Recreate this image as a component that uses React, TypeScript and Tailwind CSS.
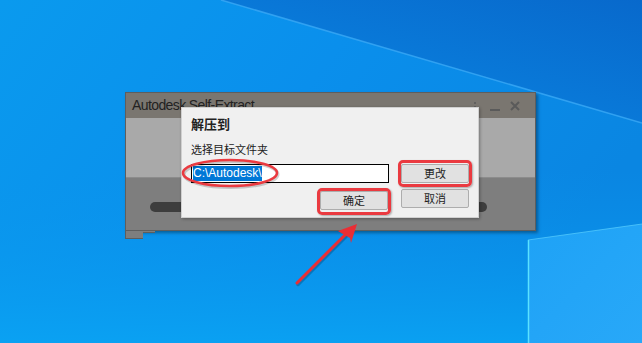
import React from "react";

const cjk = { fontFamily: '"Noto Sans CJK SC", "Noto Sans", sans-serif' };
const latin = { fontFamily: '"Liberation Sans", Arial, sans-serif' };

function Wallpaper() {
  return (
    <svg className="absolute inset-0" width="642" height="343" viewBox="0 0 642 343">
      <defs>
        <linearGradient id="base" x1="0" y1="0" x2="1" y2="0.4">
          <stop offset="0" stopColor="#0a9aee" />
          <stop offset="0.5" stopColor="#0a8fec" />
          <stop offset="1" stopColor="#0a86e2" />
        </linearGradient>
        <linearGradient id="dark" x1="0" y1="1" x2="1" y2="0">
          <stop offset="0" stopColor="#0a88e4" />
          <stop offset="1" stopColor="#0869cc" />
        </linearGradient>
        <linearGradient id="bottom" x1="0" y1="0" x2="0" y2="1">
          <stop offset="0" stopColor="#0a95ec" stopOpacity="0" />
          <stop offset="1" stopColor="#0aa3f3" stopOpacity="0.9" />
        </linearGradient>
        <linearGradient id="pane" x1="0" y1="0" x2="1" y2="1">
          <stop offset="0" stopColor="#1ea2f6" />
          <stop offset="1" stopColor="#28a8f8" />
        </linearGradient>
      </defs>
      <rect x="0" y="0" width="642" height="343" fill="url(#base)" />
      <rect x="0" y="170" width="642" height="173" fill="url(#bottom)" />
      <polygon points="221,0 642,0 642,123" fill="url(#dark)" />
      <line x1="221" y1="0" x2="642" y2="123" stroke="#3aa9f6" strokeWidth="1.5" opacity="0.8" />
      <polygon points="528,240 642,224 642,343 528,343" fill="url(#pane)" />
      <line x1="528.5" y1="240" x2="528.5" y2="343" stroke="#5ae2ff" strokeWidth="1.5" />
      <line x1="528" y1="240" x2="642" y2="224" stroke="#5ad0ff" strokeWidth="1" opacity="0.7" />
    </svg>
  );
}

function BackWindow() {
  return (
    <div className="absolute left-[125px] top-[92px] w-[411px] h-[139px]">
      <div className="flex flex-col w-full h-full border border-[#5e5e5e] shadow-[2px_2px_3px_rgba(0,0,0,0.35)]">
        <div className="h-[25px] bg-[#7a7670] flex items-center pl-[6px] pr-[10px]">
          <span className="text-[14px] text-[#222] tracking-[-0.6px]" style={latin}>
            Autodesk Self-Extract
          </span>
          <div className="ml-auto flex items-center">
            <div className="w-[20px] h-[20px] flex items-center justify-center">
              <svg width="4" height="12" viewBox="0 0 4 12">
                <circle cx="2" cy="3" r="1" fill="#5a5a5a" />
                <circle cx="2" cy="7" r="1" fill="#5a5a5a" />
                <circle cx="2" cy="11" r="1" fill="#5a5a5a" />
              </svg>
            </div>
            <div className="w-[20px] h-[20px] flex items-center justify-center">
              <svg width="10" height="12" viewBox="0 0 10 12">
                <line x1="0" y1="10" x2="10" y2="10" stroke="#5a5a5a" strokeWidth="2" />
              </svg>
            </div>
            <div className="w-[20px] h-[20px] flex items-center justify-center">
              <svg width="10" height="10" viewBox="0 0 10 10">
                <path d="M1 1 L9 9 M9 1 L1 9" stroke="#5a5a5a" strokeWidth="2" />
              </svg>
            </div>
          </div>
        </div>
        <div className="h-[60px] bg-[#a9a9a9] border-b border-[#8c8c8c]" />
        <div className="flex-1 bg-[#7e7e7e] pl-[24px] pt-[24px]">
          <div className="w-[337px] h-[10px] rounded-full bg-[#3d3d3d]" />
        </div>
      </div>
      <div className="flex">
        <div className="w-[18px] h-[8px] bg-[#7e7e7e] border-l border-b border-[#5e5e5e]" />
        <div className="w-[12px] h-[2px] bg-[#7e7e7e] border-b border-[#5e5e5e]" />
      </div>
    </div>
  );
}

function Btn({ children, className = "" }: { children: React.ReactNode; className?: string }) {
  return (
    <div
      className={
        "w-[68px] h-[19px] bg-[#e1e1e1] border border-[#adadad] rounded-[2px] flex items-center justify-center text-[11px] text-[#1e1e1e] " +
        className
      }
      style={cjk}
    >
      {children}
    </div>
  );
}

function Dialog() {
  return (
    <div className="absolute left-[181px] top-[107px] w-[298px] h-[111px] bg-[#f0f0f0] border border-[#d0d0d0] shadow-[1px_1px_3px_rgba(0,0,0,0.3)] flex flex-col pl-[9px] pt-[8px]">
      <div className="text-[13px] leading-[16px] font-bold text-[#222]" style={cjk}>
        解压到
      </div>
      <div className="mt-[10px] text-[11px] leading-[14px] text-[#222]" style={cjk}>
        选择目标文件夹
      </div>
      <div className="mt-[8px] grid grid-cols-[198px_68px] gap-x-[12px] gap-y-[6px]">
        <div className="h-[19px] bg-white border border-black flex items-center">
          <span className="ml-[1px] bg-[#0078d7] text-white text-[12px] leading-[15px]" style={latin}>
            C:\Autodesk\
          </span>
        </div>
        <Btn>更改</Btn>
        <Btn className="justify-self-end mr-[1px] mt-[2px] h-[18px]">确定</Btn>
        <Btn>取消</Btn>
      </div>
    </div>
  );
}

function Annotations() {
  return (
    <>
      <div className="absolute left-[398px] top-[160px] w-[74px] h-[27px] border-[3px] border-[#ea3a40] rounded-[5px] shadow-[1px_1px_2px_rgba(0,0,0,0.3)]" />
      <div className="absolute left-[317px] top-[188px] w-[74px] h-[27px] border-[3px] border-[#ea3a40] rounded-[5px] shadow-[1px_1px_2px_rgba(0,0,0,0.3)]" />
      <svg className="absolute inset-0 pointer-events-none" width="642" height="343" viewBox="0 0 642 343">
        <ellipse cx="230" cy="173" rx="47" ry="13" fill="none" stroke="rgba(0,0,0,0.18)" strokeWidth="3" transform="translate(1 1.5)" />
        <ellipse cx="230" cy="173" rx="47" ry="13" fill="none" stroke="#ea3a40" strokeWidth="2.5" />
        <g transform="translate(1 1.5)" opacity="0.2">
          <line x1="297" y1="283" x2="348" y2="232" stroke="#000" strokeWidth="3.5" strokeLinecap="round" />
        </g>
        <line x1="297" y1="283" x2="348" y2="232" stroke="#ea2e35" strokeWidth="3" strokeLinecap="round" />
        <polygon points="357,224 338,231 343,234 350,238 351,243" fill="#ea2e35" />
      </svg>
    </>
  );
}

export default function App() {
  return (
    <div className="relative w-[642px] h-[343px] overflow-hidden">
      <Wallpaper />
      <BackWindow />
      <Dialog />
      <Annotations />
    </div>
  );
}
